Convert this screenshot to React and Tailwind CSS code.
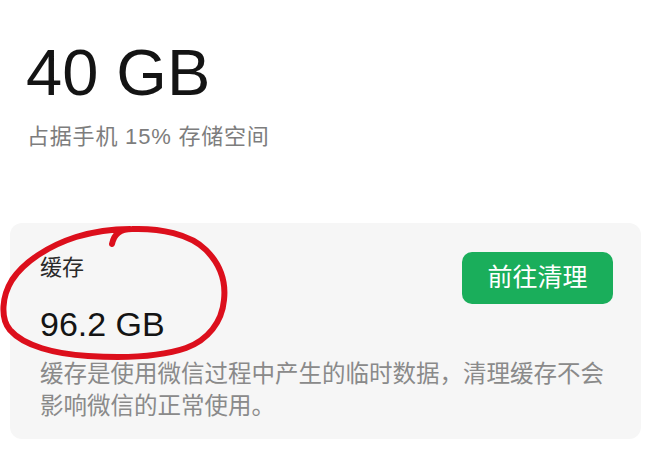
const font = { fontFamily: '"Liberation Sans", "Noto Sans CJK SC", sans-serif' };

function Annotation() {
  return (
    <svg
      className="pointer-events-none absolute left-0 top-0"
      width="660"
      height="456"
      viewBox="0 0 660 456"
      fill="none"
    >
      <path
        d="M112 244 C114 234 120 229 132 229 C160 228 190 234 206 250 C220 264 226 282 224 300 C222 322 208 340 186 348 C160 357 120 358 88 356 C55 354 24 346 10 330 C0 318 2 296 12 280 C24 262 48 246 76 237 C96 231 112 229 130 229"
        stroke="#dc0f1c"
        strokeWidth="6"
        strokeLinecap="round"
        strokeLinejoin="round"
      />
    </svg>
  );
}

export default function App() {
  return (
    <div className="relative h-[456px] w-[660px] overflow-hidden bg-white" style={font}>
      <div className="pl-[26px] pt-10">
        <div className="text-[65px] leading-[65px] text-[#141414]">40 GB</div>
        <div className="mt-[21px] pl-px text-[22px] leading-[22px] tracking-[0.8px] text-[#7d7d7d]">
          占据手机 15% 存储空间
        </div>
      </div>

      <div className="ml-[10px] mt-[75px] w-[631px] rounded-xl bg-[#f6f6f6] pb-[17px] pl-[30px] pr-[28px]">
        <div className="flex justify-between">
          <div className="pt-[34px]">
            <div className="text-[22px] leading-[22px] text-[#2a2a2a]">缓存</div>
            <div className="mt-[28px] text-[34px] leading-[34px] text-[#141414]">96.2 GB</div>
          </div>
          <button className="mt-[29px] flex h-[52px] w-[151px] items-center justify-center rounded-[10px] bg-[#1aae5b] text-[25px] text-white">
            前往清理
          </button>
        </div>
        <p className="mt-[17px] text-[23.5px] leading-[32px] text-[#8a8a8a]">
          缓存是使用微信过程中产生的临时数据，清理缓存不会
          <br />
          影响微信的正常使用。
        </p>
      </div>

      <Annotation />
    </div>
  );
}
